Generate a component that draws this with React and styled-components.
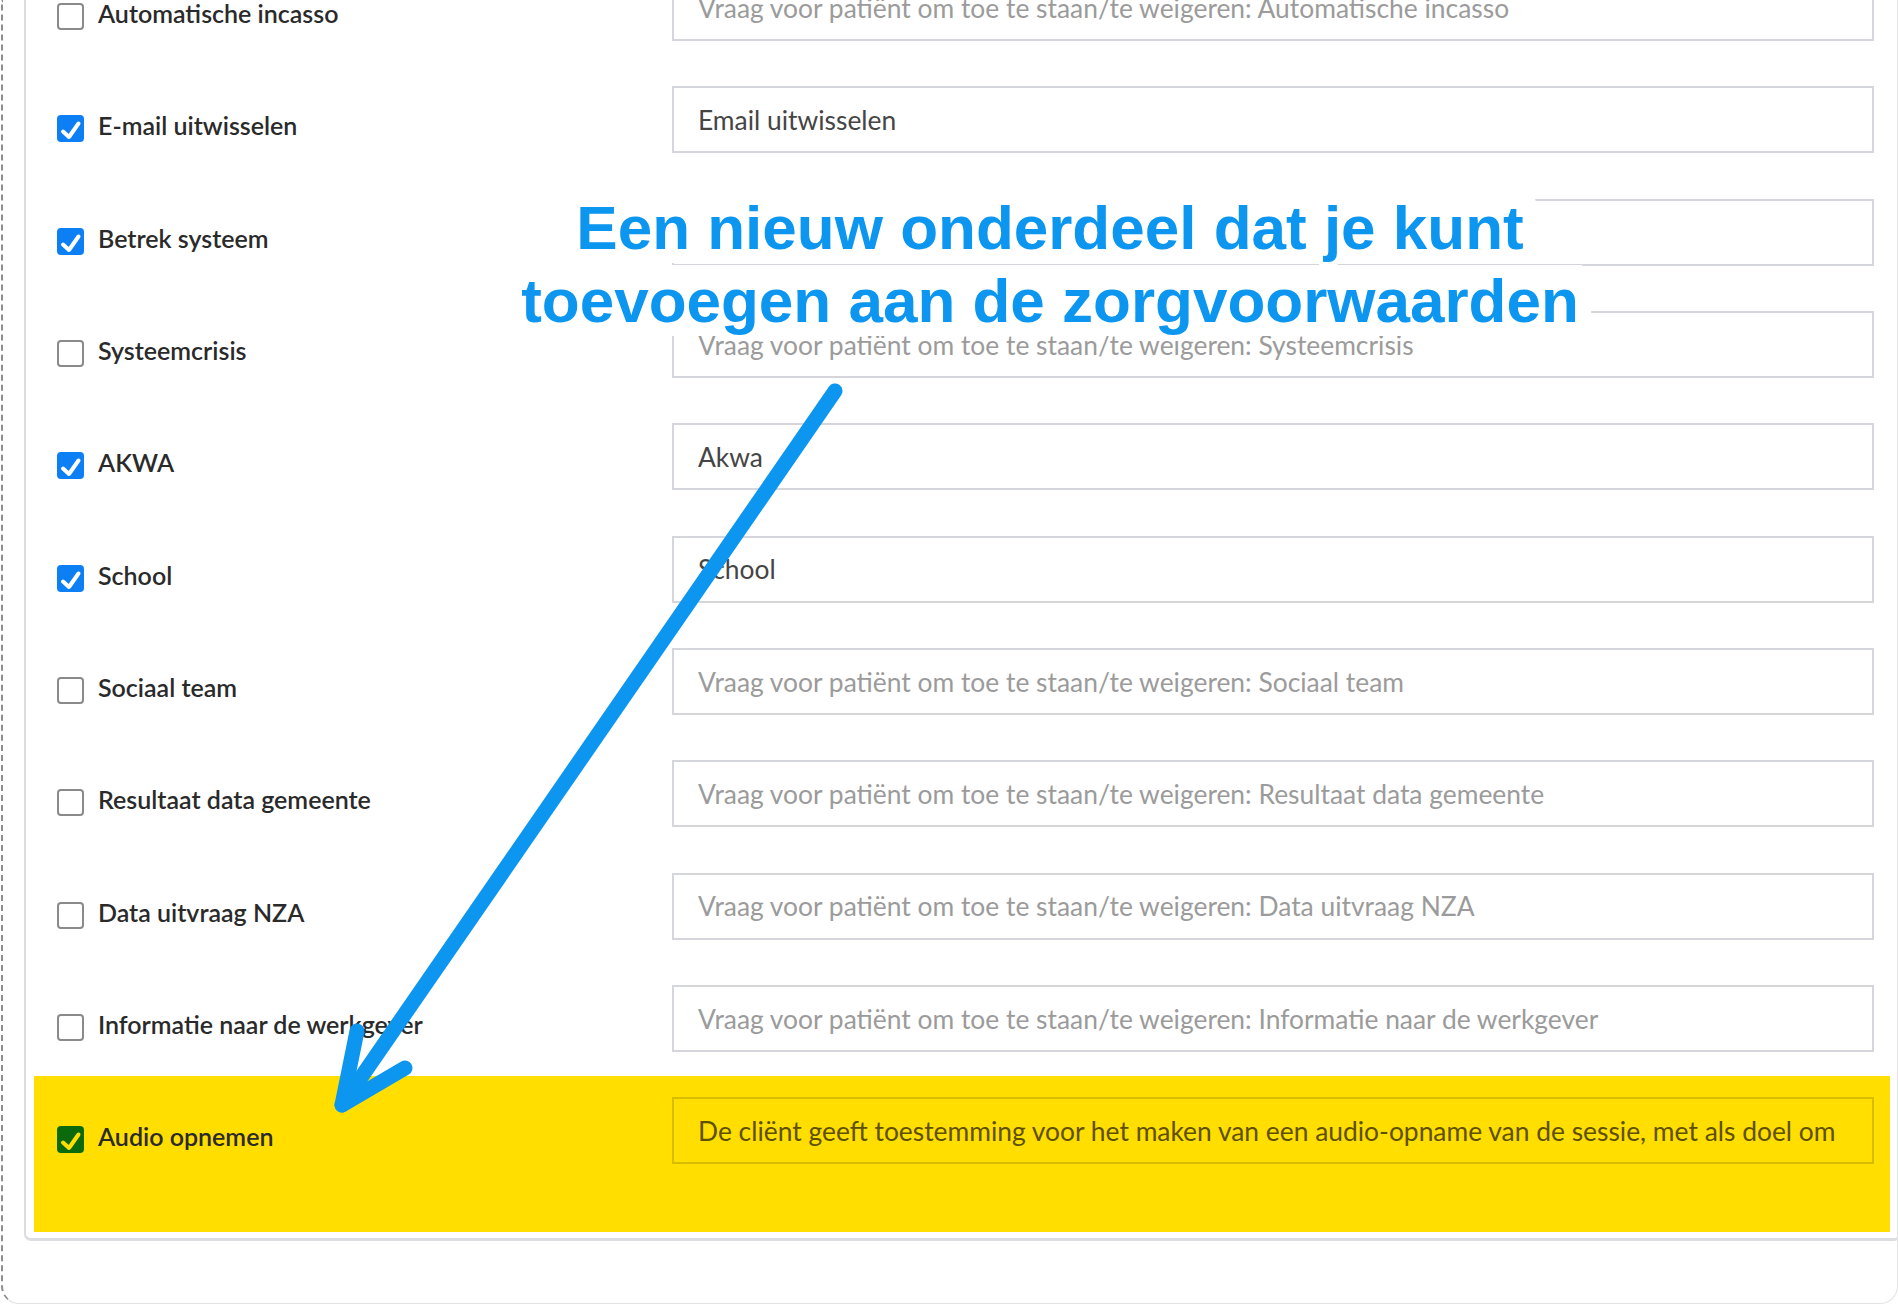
import React from "react";
import styled, { createGlobalStyle } from "styled-components";

const GlobalStyle = createGlobalStyle`
  html, body {
    margin: 0;
    padding: 0;
    background: #fff;
  }
  body {
    font-family: Lato, "Open Sans", sans-serif;
    overflow: hidden;
  }
`;

const Frame = styled.div`
  position: relative;
  box-sizing: border-box;
  height: 1304px;
  margin-left: 1px;
  border-left: 2px dashed #8d8d8d;
  border-right: 1px solid #e4e4e4;
  border-bottom: 1px solid #e4e4e4;
  border-radius: 0 0 18px 18px;
  overflow: hidden;
`;

// the list is scrolled, so the top of the card sits above the fold
const Card = styled.div`
  margin: -26px -4px 0 21px;
  padding: 0 9px 6px 8px;
  border: 2px solid #dcdde0;
  border-top: none;
  border-bottom-width: 3px;
  border-radius: 0 0 7px 7px;
  background: #fff;
`;

const Row = styled.div`
  display: flex;
  align-items: flex-start;
  margin-top: ${(p) => (p.$highlight ? "-21px" : "0")};
  padding: ${(p) =>
    p.$highlight ? "21px 16px 67.5px 23px" : "0 16px 45.35px 23px"};
  background: ${(p) => (p.$highlight ? "#ffde00" : "transparent")};
`;

const Option = styled.label`
  flex: 0 0 615px;
  display: flex;
  align-items: flex-start;
  gap: 14px;
  padding-top: 26px;
  font: 600 25px/27px Lato, "Open Sans", sans-serif;
  color: #2a2a2a;
`;

const Box = styled.span`
  flex: 0 0 27px;
  height: 27px;
  margin-top: 3px;
  box-sizing: border-box;
  display: flex;
  border-radius: 4px;
  border: ${(p) => (p.$checked ? "none" : "2px solid #8a8a8a")};
  background: ${(p) => (p.$checked ? p.$tone : "#fff")};
`;

const Field = styled.input`
  flex: 1;
  min-width: 0;
  box-sizing: border-box;
  height: 67px;
  margin: 0;
  padding: 0 24px;
  border: 2px solid ${(p) => (p.$highlight ? "#d8bc00" : "#d4d6db")};
  border-radius: 0;
  background: ${(p) => (p.$highlight ? "transparent" : "#fff")};
  font: 400 26.4px Lato, "Open Sans", sans-serif;
  color: ${(p) => (p.$highlight ? "#5e5000" : "#454545")};
  outline: none;

  &::placeholder {
    color: #9b9b9b;
    opacity: 1;
  }
`;

const Callout = styled.div`
  position: absolute;
  top: 192px;
  left: 1047px;
  transform: translateX(-50%);
  display: flex;
  flex-direction: column;
  align-items: center;
  gap: 2px;
  pointer-events: none;
`;

const CalloutLine = styled.span`
  display: block;
  white-space: nowrap;
  padding: 0 12px;
  border-radius: 12px;
  background: #fff;
  font: 700 62px/71px "Liberation Sans", Arial, sans-serif;
  color: #0c96f0;
  text-shadow: 0 5px 0 #fff, 0 -5px 0 #fff, 5px 0 0 #fff, -5px 0 0 #fff,
    4px 4px 0 #fff, -4px 4px 0 #fff, 4px -4px 0 #fff, -4px -4px 0 #fff;
`;

const Pointer = styled.svg`
  position: absolute;
  left: 0;
  top: 0;
  width: 100%;
  height: 100%;
  pointer-events: none;
  overflow: visible;
`;

const Check = ({ color }) => (
  <svg width="27" height="27" viewBox="0 0 27 27">
    <path
      d="M6 16.5 L12 22 L21.5 8.5"
      fill="none"
      stroke={color}
      strokeWidth="4"
      strokeLinecap="round"
      strokeLinejoin="round"
    />
  </svg>
);

const ask = (name) => `Vraag voor patiënt om toe te staan/te weigeren: ${name}`;

const consents = [
  { label: "Automatische incasso", placeholder: ask("Automatische incasso") },
  { label: "E-mail uitwisselen", checked: true, value: "Email uitwisselen" },
  { label: "Betrek systeem", checked: true, value: "Betrek systeem" },
  { label: "Systeemcrisis", placeholder: ask("Systeemcrisis") },
  { label: "AKWA", checked: true, value: "Akwa" },
  { label: "School", checked: true, value: "School" },
  { label: "Sociaal team", placeholder: ask("Sociaal team") },
  { label: "Resultaat data gemeente", placeholder: ask("Resultaat data gemeente") },
  { label: "Data uitvraag NZA", placeholder: ask("Data uitvraag NZA") },
  {
    label: "Informatie naar de werkgever",
    placeholder: ask("Informatie naar de werkgever"),
  },
  {
    label: "Audio opnemen",
    checked: true,
    highlight: true,
    value:
      "De cliënt geeft toestemming voor het maken van een audio-opname van de sessie, met als doel om",
  },
];

export default function App() {
  return (
    <>
      <GlobalStyle />
      <Frame>
        <Card>
          {consents.map((c) => (
            <Row key={c.label} $highlight={c.highlight}>
              <Option>
                <Box
                  $checked={c.checked}
                  $tone={c.highlight ? "#0a6a0c" : "#0d7ff5"}
                >
                  {c.checked && (
                    <Check color={c.highlight ? "#ffde00" : "#fff"} />
                  )}
                </Box>
                {c.label}
              </Option>
              <Field
                readOnly
                $highlight={c.highlight}
                placeholder={c.placeholder}
                defaultValue={c.value}
              />
            </Row>
          ))}
        </Card>

        <Callout>
          <CalloutLine>Een nieuw onderdeel dat je kunt</CalloutLine>
          <CalloutLine>toevoegen aan de zorgvoorwaarden</CalloutLine>
        </Callout>

        <Pointer viewBox="0 0 1894 1303">
          <g
            fill="none"
            stroke="#0c96f0"
            strokeWidth="15"
            strokeLinecap="round"
            strokeLinejoin="round"
          >
            <path d="M832 391 L339 1105" />
            <path d="M354 1031 L339 1105 L402 1068" />
          </g>
        </Pointer>
      </Frame>
    </>
  );
}
